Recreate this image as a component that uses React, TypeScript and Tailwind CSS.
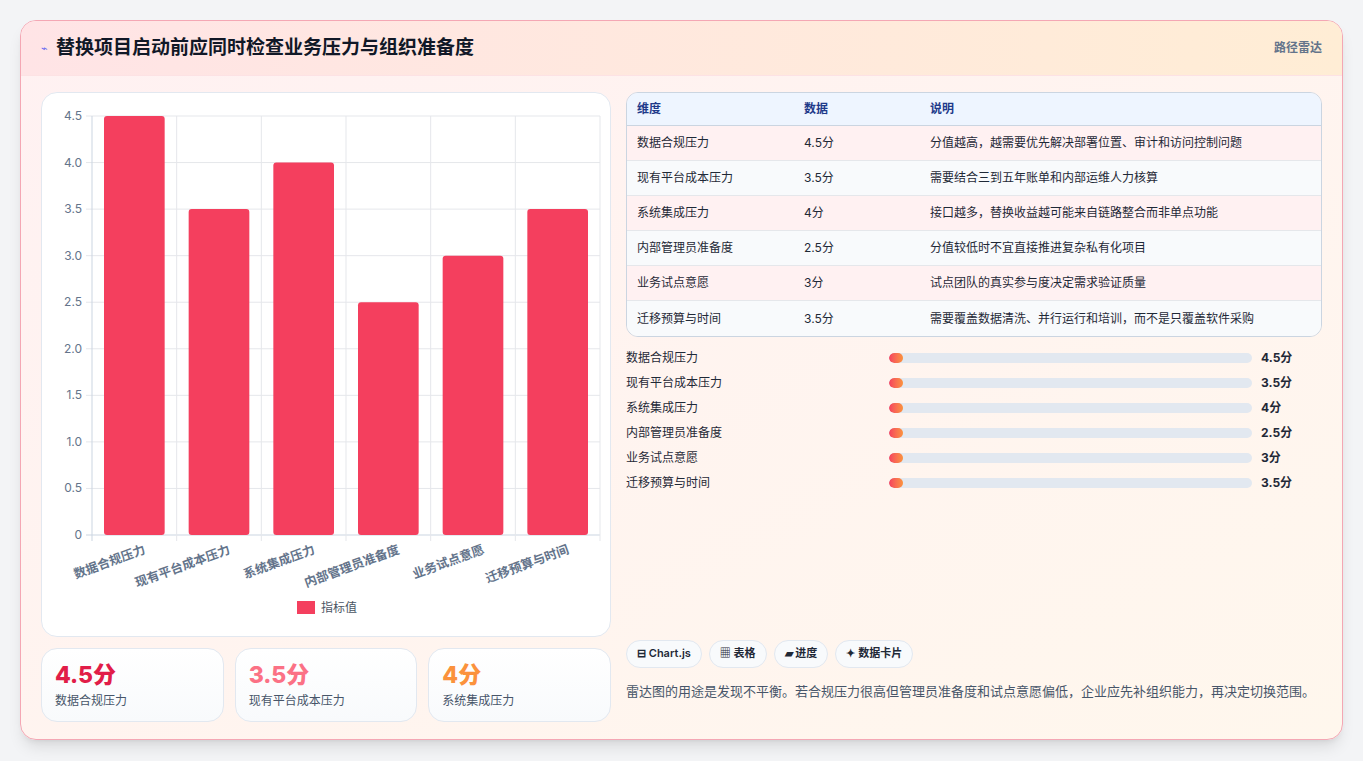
import React from "react";

const rows = [
  { name: "数据合规压力", v: 4.5, note: "分值越高，越需要优先解决部署位置、审计和访问控制问题" },
  { name: "现有平台成本压力", v: 3.5, note: "需要结合三到五年账单和内部运维人力核算" },
  { name: "系统集成压力", v: 4, note: "接口越多，替换收益越可能来自链路整合而非单点功能" },
  { name: "内部管理员准备度", v: 2.5, note: "分值较低时不宜直接推进复杂私有化项目" },
  { name: "业务试点意愿", v: 3, note: "试点团队的真实参与度决定需求验证质量" },
  { name: "迁移预算与时间", v: 3.5, note: "需要覆盖数据清洗、并行运行和培训，而不是只覆盖软件采购" },
];

function Chart() {
  const x0 = 50, x1 = 558, yTop = 23, yBot = 442;
  const w = (x1 - x0) / 6;
  const ticks = [0, 0.5, 1, 1.5, 2, 2.5, 3, 3.5, 4, 4.5];
  const y = (v: number) => yBot - (v / 4.5) * (yBot - yTop);
  return (
    <svg width="570" height="544" className="block">
      {ticks.map((t) => (
        <g key={t}>
          <line x1={x0 - 6} x2={x1} y1={y(t)} y2={y(t)} stroke={t === 0 ? "#cbd5e1" : "#e5e7eb"} />
          <text x={x0 - 10} y={y(t) + 4} textAnchor="end" fontSize="12" fill="#64748b">{t === 0 ? "0" : t.toFixed(1)}</text>
        </g>
      ))}
      {Array.from({ length: 7 }).map((_, i) => (
        <line key={i} x1={x0 + i * w} x2={x0 + i * w} y1={yTop} y2={yBot + 6} stroke={i === 0 ? "#cbd5e1" : "#e5e7eb"} />
      ))}
      {rows.map((r, i) => (
        <rect key={r.name} x={x0 + i * w + 12} y={y(r.v)} width={w - 24} height={yBot - y(r.v)} rx="3" fill="#f43f5e" />
      ))}
      {rows.map((r, i) => (
        <text key={r.name} transform={`translate(${x0 + i * w + w / 2 + 12},${yBot + 18}) rotate(-20)`} textAnchor="end" fontSize="12.5" fontWeight="600" fill="#64748b">{r.name}</text>
      ))}
      <rect x="255" y="508" width="18" height="13" fill="#f43f5e" />
      <text x="279" y="519" fontSize="12" fill="#4b5563">指标值</text>
    </svg>
  );
}

export default function App() {
  return (
    <div className="w-[1363px] h-[761px] bg-[#f3f4f6] p-5" style={{ fontFamily: "Inter, 'Noto Sans CJK SC', sans-serif" }}>
      <div className="h-[720px] rounded-2xl border border-[#f4a7b4] bg-gradient-to-br from-[#fff1f2] to-[#fff7ed] shadow-lg overflow-hidden flex flex-col">
        <div className="h-[55px] flex items-center justify-between px-5 border-b border-[#fde2e4] bg-gradient-to-r from-[#ffe4e6] to-[#ffedd5]">
          <div className="flex items-center gap-2">
            <span className="text-[#6366f1] text-[11px]">⌁</span>
            <h1 className="text-[19px] font-bold text-[#111827]">替换项目启动前应同时检查业务压力与组织准备度</h1>
          </div>
          <span className="text-[12px] font-semibold text-[#64748b]">路径雷达</span>
        </div>
        <div className="flex gap-[15px] px-5 pt-4">
          <div className="w-[570px] flex flex-col gap-[11px]">
            <div className="h-[545px] bg-white rounded-2xl border border-[#e2e8f0]">
              <Chart />
            </div>
            <div className="grid grid-cols-3 gap-[11px]">
              {[["4.5分", "text-[#e11d48]", "数据合规压力"], ["3.5分", "text-[#fb7185]", "现有平台成本压力"], ["4分", "text-[#fb923c]", "系统集成压力"]].map(([v, c, l]) => (
                <div key={l} className="h-[74px] rounded-2xl border border-[#e2e8f0] bg-gradient-to-b from-white to-[#f8fafc] px-[13px] pt-[11px]">
                  <div className={`text-[23px] font-extrabold leading-[30px] ${c}`}>{v}</div>
                  <div className="text-[12px] text-[#475569] mt-0.5">{l}</div>
                </div>
              ))}
            </div>
          </div>
          <div className="flex-1 flex flex-col">
            <div className="rounded-xl border border-[#cbd5e1] overflow-hidden text-[12px]">
              <div className="flex h-[33px] items-center bg-[#eef5ff] border-b border-[#cbd5e1] font-semibold text-[#1e3a8a] px-[10px]">
                <div className="w-[167px]">维度</div><div className="w-[126px]">数据</div><div>说明</div>
              </div>
              {rows.map((r, i) => (
                <div key={r.name} className={`flex h-[35px] items-center px-[10px] text-[#1f2937] ${i < 5 ? "border-b border-[#e5e7eb]" : ""} ${i % 2 === 0 ? "bg-[#fff1f2]" : "bg-[#f8fafc]"}`}>
                  <div className="w-[167px]">{r.name}</div><div className="w-[126px]">{r.v}分</div><div>{r.note}</div>
                </div>
              ))}
            </div>
            <div className="mt-2 flex flex-col">
              {rows.map((r) => (
                <div key={r.name} className="h-[25px] flex items-center text-[12px]">
                  <div className="w-[263px] text-[#1f2937]">{r.name}</div>
                  <div className="w-[363px] h-[10px] rounded-full bg-[#e2e8f0] overflow-hidden">
                    <div className="w-[14px] h-full rounded-full bg-gradient-to-r from-[#f43f5e] to-[#fb923c]" />
                  </div>
                  <div className="ml-[9px] font-bold text-[#1f2937]">{r.v}分</div>
                </div>
              ))}
            </div>
            <div className="mt-auto flex gap-[7px] pb-[14px]">
              {["⊟ Chart.js", "▦ 表格", "▰ 进度", "✦ 数据卡片"].map((c) => (
                <span key={c} className="h-[28px] px-[10px] flex items-center rounded-full border border-[#e2e8f0] bg-[#f8fafc] text-[11px] font-semibold text-[#1f2937]">{c}</span>
              ))}
            </div>
            <p className="text-[13px] text-[#475569] pb-[21px]">雷达图的用途是发现不平衡。若合规压力很高但管理员准备度和试点意愿偏低，企业应先补组织能力，再决定切换范围。</p>
          </div>
        </div>
      </div>
    </div>
  );
}
